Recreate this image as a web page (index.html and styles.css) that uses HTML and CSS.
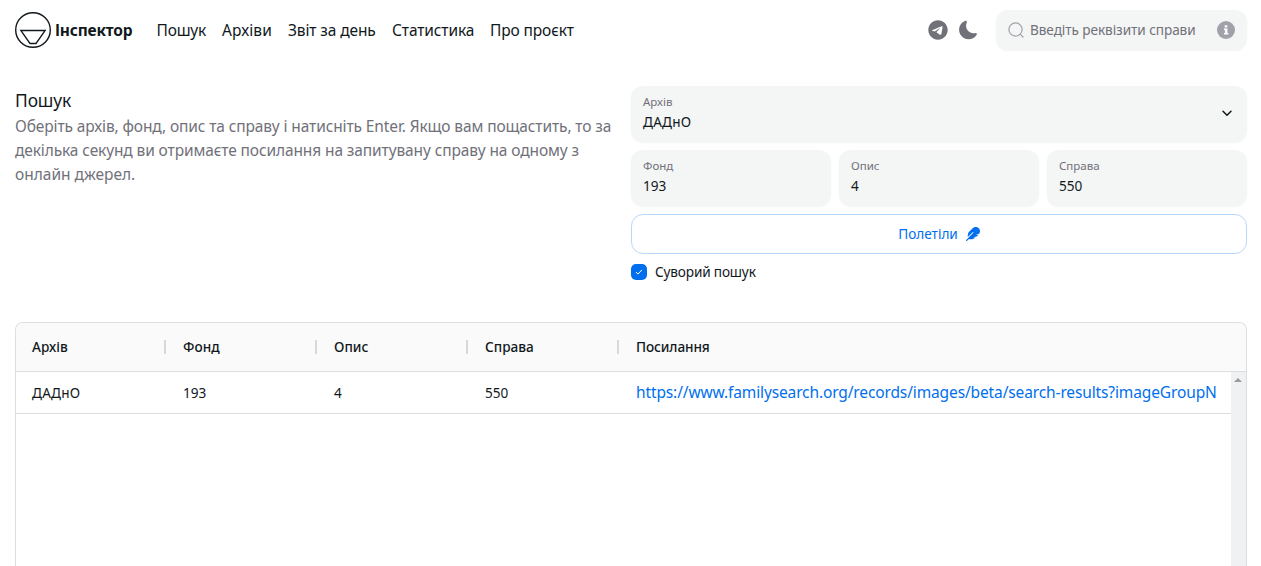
FILE: index.html
```html
<!DOCTYPE html>
<html lang="uk">
<head>
<meta charset="utf-8">
<title>Інспектор</title>
<link rel="stylesheet" href="styles.css">
</head>
<body>
<header class="navbar">
  <a class="brand">
    <svg class="brand-logo" width="36" height="36" viewBox="0 0 36 36" fill="none" stroke="currentColor"><circle cx="18" cy="18" r="17.3" stroke-width="1.4"/><path d="M5.800 18.500H30.200L21 31.500H15Z" stroke-width="1.3"/></svg>
    <span class="brand-name">Інспектор</span>
  </a>
  <nav class="menu">
    <a class="menu-search">Пошук</a>
    <a class="menu-archives">Архіви</a>
    <a class="menu-report">Звіт за день</a>
    <a class="menu-stats">Статистика</a>
    <a class="menu-about">Про проєкт</a>
  </nav>
  <div class="tools">
    <svg class="telegram" width="20" height="20" viewBox="0 0 496 512"><path fill="currentColor" d="M248 8C111 8 0 119 0 256s111 248 248 248 248-111 248-248S385 8 248 8zm115 168.700c-3.700 39.200-19.900 134.400-28.100 178.300-3.500 18.600-10.300 24.800-16.900 25.400-14.400 1.300-25.300-9.500-39.300-18.700-21.800-14.300-34.200-23.200-55.300-37.200-24.500-16.100-8.600-25 5.300-39.500 3.700-3.800 67.100-61.500 68.300-66.700.2-.7.300-3.100-1.200-4.400s-3.600-.8-5.100-.5q-3.300.7-104.600 69.100-14.800 10.200-26.900 9.900c-8.900-.2-25.900-5-38.600-9.100-15.500-5-27.900-7.700-26.800-16.300q.8-6.700 18.500-13.700 108.400-47.200 144.600-62.300c68.900-28.600 83.200-33.600 92.500-33.800 2.100 0 6.600.5 9.600 2.900a10.500 10.500 0 0 1 3.500 6.700A43.800 43.800 0 0 1 363 176.700z"/></svg>
    <svg class="moon" width="22" height="22" viewBox="0 0 24 24"><path fill="currentColor" d="M21.530 15.930c-.16-.27-.61-.69-1.730-.49-.62.110-1.250.16-1.880.13-2.330-.1-4.440-1.170-5.910-2.820-1.300-1.450-2.100-3.340-2.110-5.380 0-1.140.22-2.240.67-3.280.44-1.010.13-1.540-.09-1.760-.23-.23-.77-.55-1.830-.11-4.090 1.720-6.620 5.820-6.320 10.210.3 4.130 3.200 7.660 7.040 8.990.92.320 1.890.51 2.890.55.16.01.32.02.48.02 3.350 0 6.490-1.580 8.470-4.270.67-.93.490-1.520.32-1.790z"/></svg>
    <div class="quick-search">
      <svg class="lens" width="16" height="16" viewBox="0 0 16 16" fill="none" stroke="currentColor" stroke-width="1.200" stroke-linecap="round"><circle cx="7.500" cy="7.500" r="6.600"/><path d="M12.600 12.600 15 15"/></svg>
      <span class="placeholder">Введіть реквізити справи</span>
      <svg class="info" width="18" height="18" viewBox="0 0 18 18"><circle cx="9" cy="9" r="9" fill="#a1a1aa"/><path fill="#fff" d="M7.700 4.200h2.600v2.300H7.700zM7 7.500h3.400v4.500h1v1.600H6.900V12h1V9.100H7z"/></svg>
    </div>
  </div>
</header>
<main>
  <section class="search">
    <div class="intro">
      <h1>Пошук</h1>
      <p>Оберіть архів, фонд, опис та справу і натисніть Enter. Якщо вам пощастить, то за<br>декілька секунд ви отримаєте посилання на запитувану справу на одному з<br><span class="intro-end">онлайн джерел.</span></p>
    </div>
    <form class="form">
      <div class="field select">
        <div><div class="label">Архів</div><div class="value archive">ДАДнО</div></div>
        <svg width="16" height="16" viewBox="0 0 16 16" fill="none" stroke="currentColor" stroke-width="1.500" stroke-linecap="round" stroke-linejoin="round"><path d="m4 6.200 4 4 4-4"/></svg>
      </div>
      <div class="triple">
        <div class="field"><div class="label">Фонд</div><div class="value">193</div></div>
        <div class="field"><div class="label">Опис</div><div class="value">4</div></div>
        <div class="field"><div class="label">Справа</div><div class="value">550</div></div>
      </div>
      <div class="submit"><span>Полетіли</span><svg width="14" height="14" viewBox="0 0 512 512"><path fill="currentColor" d="M467.140 44.840c-62.550-62.480-161.670-64.780-252.280 25.730-78.610 78.520-60.980 60.920-85.750 85.660-60.460 60.390-70.390 150.830-63.640 211.170l178.440-178.250c6.260-6.250 16.400-6.250 22.650 0s6.250 16.380 0 22.630L7.040 471.030c-9.380 9.370-9.380 24.570 0 33.940 9.380 9.370 24.600 9.370 33.980 0l66.100-66.030C159.420 454.650 279 457.110 353.950 384h-98.190l147.570-49.140c49.990-49.930 36.380-36.180 46.310-46.860h-97.780l131.540-43.800c45.440-74.460 34.310-148.840-16.260-199.360z"/></svg></div>
      <div class="strict"><span class="box"><svg width="8" height="8" viewBox="0 0 8 8" fill="none" stroke="#fff" stroke-linecap="round" stroke-linejoin="round"><path d="m1.200 4.300 1.800 1.800 3.600-3.900"/></svg></span><span class="strict-label">Суворий пошук</span></div>
    </form>
  </section>
  <section class="grid">
    <div class="row head">
      <div class="cell">Архів</div><div class="cell">Фонд</div><div class="cell">Опис</div><div class="cell">Справа</div><div class="cell last">Посилання</div>
    </div>
    <div class="body">
      <div class="rows"><div class="row">
        <div class="cell archive">ДАДнО</div><div class="cell">193</div><div class="cell">4</div><div class="cell">550</div><div class="cell last"><a class="link">https://www.familysearch.org/records/images/beta/search-results?imageGroupN</a></div>
      </div></div>
      <div class="scrollbar"><svg width="8" height="4" viewBox="0 0 8 4"><path fill="#9b9ca0" d="M0 4 4 0 8 4z"/></svg></div>
    </div>
  </section>
</main>
</body>
</html>
```
FILE: styles.css
```css
* { box-sizing: border-box; }
body { margin: 0; height: 566px; overflow: hidden; background: #fff; color: #11181c; font: 15.5px/24px "Noto Sans", sans-serif; }
svg { display: block; flex: none; }
h1, p { margin: 0; font-weight: 400; }
.navbar { display: flex; align-items: center; height: 60px; padding: 0 14px 0 15px; white-space: nowrap; }
.brand { display: flex; align-items: center; gap: 4px; width: 141.5px; }
.brand-name { font-weight: 700; letter-spacing: -.2px; }
.menu { display: flex; gap: 16px; letter-spacing: -.12px; }
.menu-search { width: 49.5px; letter-spacing: -.2px; }
.menu-archives { width: 50px; letter-spacing: .1px; }
.menu-report { width: 88px; }
.menu-stats { width: 82px; }
.tools { display: flex; align-items: center; margin-left: auto; color: #71717a; }
.moon { margin: 0 17px 0 9px; }
.quick-search { display: flex; align-items: center; width: 251px; height: 40px; padding: 0 12px; border-radius: 12px; background: #f4f5f5; box-shadow: 0 1px 2px rgba(0,0,0,.05); font-size: 13.6px; letter-spacing: -.07px; }
.lens { margin-right: 6px; color: #a1a1aa; }
.info { margin-left: auto; }
.search { display: grid; grid-template-columns: 1fr 616px; padding: 26px 14px 0 15px; height: 262px; }
.intro { white-space: nowrap; color: #71717a; letter-spacing: -.115px; }
.intro-end { letter-spacing: 0; }
h1 { color: #11181c; font-size: 17.4px; line-height: 28px; }
.form { display: flex; flex-direction: column; gap: 8px; font-size: 13.6px; }
.field { height: 56px; padding: 8px 12px; border-radius: 12px; background: #f4f5f5; box-shadow: 0 1px 2px rgba(0,0,0,.05); line-height: 20px; }
.select { display: flex; justify-content: space-between; align-items: center; padding: 7px 12px 9px; }
.label { font-size: 11.5px; line-height: 16px; color: #71717a; padding-bottom: 2px; }
.archive { letter-spacing: .25px; }
.triple { display: grid; grid-template-columns: repeat(3, 1fr); gap: 8px; }
.submit { display: flex; align-items: center; justify-content: center; gap: 8px; height: 40px; border: 1px solid #b8d7fb; border-radius: 12px; color: #006fee; }
.strict { display: flex; align-items: center; gap: 8px; height: 20px; }
.strict-label { letter-spacing: -.15px; }
.box { display: grid; place-items: center; width: 16px; height: 16px; border-radius: 5px; background: #006fee; }
.grid { display: flex; flex-direction: column; height: 244px; margin: 0 14px 0 15px; border: 1px solid #dddede; border-bottom: 0; border-radius: 8px 8px 0 0; overflow: hidden; font-size: 13.6px; }
.row { display: grid; grid-template-columns: 151px 151px 151px 151px 1fr; height: 42px; border-bottom: 1px solid #dddede; align-items: center; }
.head { height: 49px; background: #fafafa; font-weight: 500; }
.cell { padding-left: 16px; white-space: nowrap; }
.head .cell:not(.last) { background: linear-gradient(#d7d8d8, #d7d8d8) 148px center / 2px 14px no-repeat; }
.head .last { letter-spacing: -.1px; }
.link { color: #006fee; font-size: 15.5px; letter-spacing: -.125px; }
.body { display: flex; flex: 1; }
.rows { flex: 1; min-width: 0; }
.scrollbar { width: 15px; background: #f0f1f3; padding: 6px 0 0 3px; }
```
